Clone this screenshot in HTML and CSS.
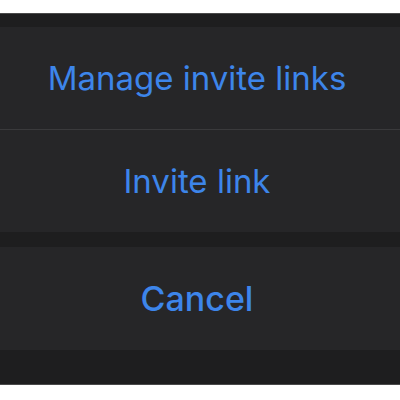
FILE: index.html
```html
<!DOCTYPE html>
<html lang="en">
<head>
    <meta charset="UTF-8">
    <meta name="viewport" content="width=device-width, initial-scale=1.0">
    <title>Invite links</title>
    <link rel="stylesheet" href="styles.css">
</head>
<body>
    <!-- Action Sheet -->
    <div class="sheet">
        <div class="group">
            <button class="action">Manage invite links</button>
            <button class="action">Invite link</button>
        </div>
        <div class="group">
            <button class="action cancel">Cancel</button>
        </div>
    </div>
</body>
</html>
```

FILE: styles.css
```css
/* General Styling */
body, html {
    margin: 0;
    background-color: white;
    font-family: Inter, "Noto Sans", sans-serif;
}
.sheet {
    margin-top: 13px;
    height: 372px;
    box-sizing: border-box;
    padding-top: 13px;
    background-color: #1e1e1f;
    border-top: 1px solid #4a4a4a;
    border-bottom: 1px solid #4a4a4a;
    display: flex;
    flex-direction: column;
    gap: 15px;
}
.group {
    display: flex;
    flex-direction: column;
    background-color: #262628;
}
.action {
    height: 102px;
    border: none;
    margin: 0;
    padding: 0 6px 0 0;
    background: none;
    color: #3d85ea;
    font-family: inherit;
    font-size: 33px;
    cursor: pointer;
}
.action + .action {
    border-top: 1px solid #3a3a3c;
    height: 103px;
}
.cancel {
    height: 103px;
    font-size: 34px;
    font-weight: 500;
}
```
